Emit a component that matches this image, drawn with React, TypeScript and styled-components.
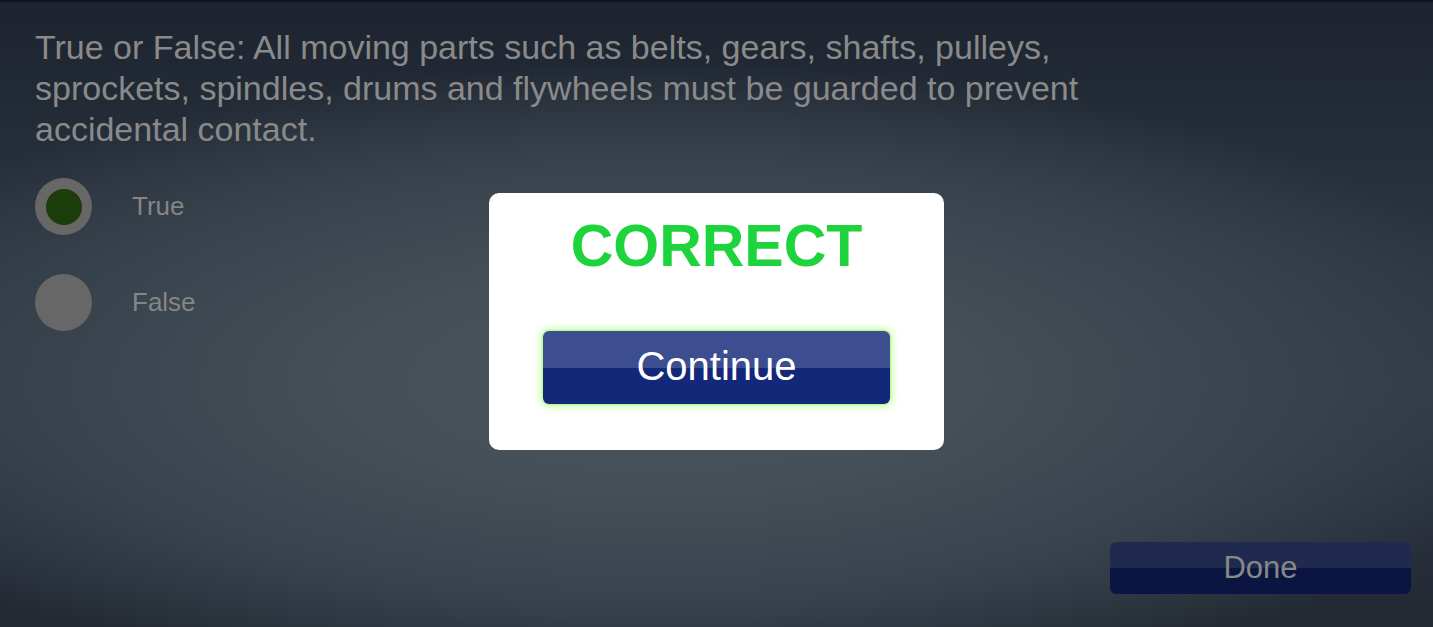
import React from "react";
import styled, { createGlobalStyle } from "styled-components";

const Global = createGlobalStyle`
  html, body { margin: 0; padding: 0; height: 100%; }
  body { font-family: "Liberation Sans", Arial, sans-serif; overflow: hidden; }
  #root { height: 100%; }
`;

const Stage = styled.div`
  position: relative;
  width: 1433px;
  height: 627px;
  box-sizing: border-box;
  border-top: 2px solid #10151d;
  background:
    radial-gradient(ellipse 900px 320px at 660px 380px, #4a555d 0%, #444f58 35%, #39434d 68%, rgba(44, 52, 62, 0) 100%),
    linear-gradient(180deg, #1d2430 0%, #2b343f 40%, #2f3843 62%, #262d38 90%, #222933 100%);
  display: flex;
  flex-direction: column;
  padding: 25px 22px 33px 35px;
  overflow: hidden;
`;

const Question = styled.p`
  margin: 0;
  max-width: 1100px;
  font-size: 34px;
  line-height: 41px;
  color: #8a8a8a;
`;

const Options = styled.div`
  display: flex;
  flex-direction: column;
  gap: 39px;
  margin-top: 28px;
`;

const Option = styled.div`
  display: flex;
  align-items: center;
  gap: 40px;
`;

const Radio = styled.div<{ $checked?: boolean }>`
  width: 57px;
  height: 57px;
  border-radius: 50%;
  background: #676767;
  display: flex;
  align-items: center;
  justify-content: center;
  &::after {
    content: "";
    display: ${(p) => (p.$checked ? "block" : "none")};
    width: 36px;
    height: 36px;
    border-radius: 50%;
    background: #1b3d0a;
  }
`;

const OptionLabel = styled.span`
  font-size: 26px;
  color: #858585;
`;

const Footer = styled.div`
  margin-top: auto;
  display: flex;
  justify-content: flex-end;
`;

const DoneButton = styled.button`
  width: 301px;
  height: 52px;
  border: none;
  border-radius: 6px;
  background: linear-gradient(180deg, #1f2a4e 0%, #1f2a4e 50%, #0a1641 50%, #0a1641 100%);
  color: #888888;
  font-family: "Liberation Sans", Arial, sans-serif;
  font-size: 31px;
  padding: 0;
  cursor: pointer;
`;

const Overlay = styled.div`
  position: absolute;
  inset: 0;
  display: flex;
  align-items: flex-start;
  justify-content: center;
  padding-top: 191px;
`;

const Modal = styled.div`
  width: 455px;
  height: 257px;
  box-sizing: border-box;
  background: #ffffff;
  border-radius: 10px;
  display: flex;
  flex-direction: column;
  align-items: center;
  padding-top: 17px;
`;

const Verdict = styled.h2`
  margin: 0;
  font-size: 59px;
  line-height: 72px;
  font-weight: 700;
  color: #1ed43c;
`;

const ContinueButton = styled.button`
  margin-top: 49px;
  width: 347px;
  height: 73px;
  border: none;
  border-radius: 6px;
  background: linear-gradient(180deg, #3c4e8f 0%, #3c4e8f 50%, #14287a 50%, #14287a 100%);
  box-shadow: 0 0 2px 1px #b6f58e, 0 0 7px 3px rgba(190, 255, 150, 0.75);
  color: #ffffff;
  font-family: "Liberation Sans", Arial, sans-serif;
  font-size: 40px;
  padding: 0 0 3px;
  cursor: pointer;
`;

export default function App() {
  return (
    <>
      <Global />
      <Stage>
        <Question>
          True or False: All moving parts such as belts, gears, shafts, pulleys, sprockets, spindles, drums and flywheels must be guarded to prevent accidental contact.
        </Question>
        <Options>
          <Option>
            <Radio $checked />
            <OptionLabel>True</OptionLabel>
          </Option>
          <Option>
            <Radio />
            <OptionLabel>False</OptionLabel>
          </Option>
        </Options>
        <Footer>
          <DoneButton>Done</DoneButton>
        </Footer>
        <Overlay>
          <Modal>
            <Verdict>CORRECT</Verdict>
            <ContinueButton>Continue</ContinueButton>
          </Modal>
        </Overlay>
      </Stage>
    </>
  );
}
